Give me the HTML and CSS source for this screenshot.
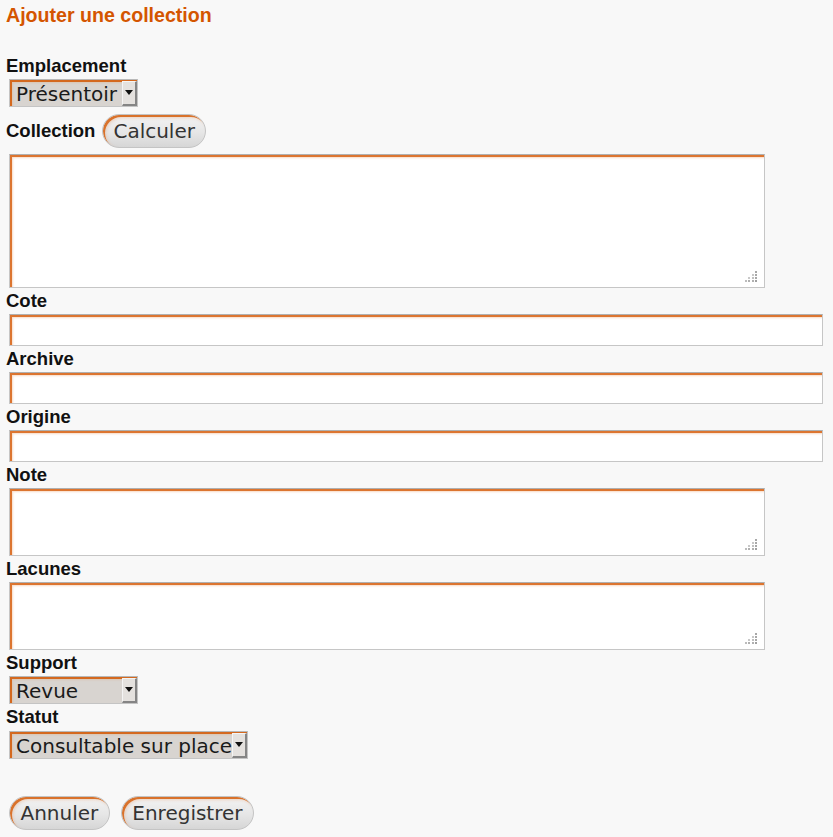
FILE: index.html
```html
<!DOCTYPE html>
<html lang="fr">
<head>
<meta charset="utf-8">
<title>Ajouter une collection</title>
<link rel="stylesheet" href="styles.css">
</head>
<body>
<h1 class="title">Ajouter une collection</h1>
<form class="form">
  <label class="label">Emplacement</label>
  <div class="select sel-short">
    <select class="select-box"><option>Présentoir</option></select>
    <span class="arrow"><svg width="8" height="5" viewBox="0 0 8 5"><path d="M0 0H8L4 5Z" fill="#111"/></svg></span>
  </div>

  <div class="row">
    <label class="label">Collection</label>
    <button type="button" class="btn">Calculer</button>
  </div>
  <div class="ta-wrap ta-tall">
    <textarea class="ta"></textarea>
    <svg class="grip" width="12" height="12" viewBox="0 0 12 12">
      <rect x="10" y="0" width="2" height="2" fill="#a8a8a8"/>
      <rect x="7" y="3" width="2" height="2" fill="#c8c8c8"/><rect x="10" y="3" width="2" height="2" fill="#a8a8a8"/>
      <rect x="3" y="6" width="2" height="2" fill="#c8c8c8"/><rect x="7" y="6" width="2" height="2" fill="#c0c0c0"/><rect x="10" y="6" width="2" height="2" fill="#a8a8a8"/>
      <rect x="0" y="9" width="2" height="2" fill="#bcbcbc"/><rect x="3" y="9" width="2" height="2" fill="#b0b0b0"/><rect x="7" y="9" width="2" height="2" fill="#b0b0b0"/><rect x="10" y="9" width="2" height="2" fill="#a0a0a0"/>
    </svg>
  </div>

  <label class="label">Cote</label>
  <input class="input" type="text">

  <label class="label">Archive</label>
  <input class="input" type="text">

  <label class="label">Origine</label>
  <input class="input" type="text">

  <label class="label">Note</label>
  <div class="ta-wrap ta-short">
    <textarea class="ta"></textarea>
    <svg class="grip" width="12" height="12" viewBox="0 0 12 12">
      <rect x="10" y="0" width="2" height="2" fill="#a8a8a8"/>
      <rect x="7" y="3" width="2" height="2" fill="#c8c8c8"/><rect x="10" y="3" width="2" height="2" fill="#a8a8a8"/>
      <rect x="3" y="6" width="2" height="2" fill="#c8c8c8"/><rect x="7" y="6" width="2" height="2" fill="#c0c0c0"/><rect x="10" y="6" width="2" height="2" fill="#a8a8a8"/>
      <rect x="0" y="9" width="2" height="2" fill="#bcbcbc"/><rect x="3" y="9" width="2" height="2" fill="#b0b0b0"/><rect x="7" y="9" width="2" height="2" fill="#b0b0b0"/><rect x="10" y="9" width="2" height="2" fill="#a0a0a0"/>
    </svg>
  </div>

  <label class="label">Lacunes</label>
  <div class="ta-wrap ta-short">
    <textarea class="ta"></textarea>
    <svg class="grip" width="12" height="12" viewBox="0 0 12 12">
      <rect x="10" y="0" width="2" height="2" fill="#a8a8a8"/>
      <rect x="7" y="3" width="2" height="2" fill="#c8c8c8"/><rect x="10" y="3" width="2" height="2" fill="#a8a8a8"/>
      <rect x="3" y="6" width="2" height="2" fill="#c8c8c8"/><rect x="7" y="6" width="2" height="2" fill="#c0c0c0"/><rect x="10" y="6" width="2" height="2" fill="#a8a8a8"/>
      <rect x="0" y="9" width="2" height="2" fill="#bcbcbc"/><rect x="3" y="9" width="2" height="2" fill="#b0b0b0"/><rect x="7" y="9" width="2" height="2" fill="#b0b0b0"/><rect x="10" y="9" width="2" height="2" fill="#a0a0a0"/>
    </svg>
  </div>

  <label class="label">Support</label>
  <div class="select sel-short">
    <select class="select-box"><option>Revue</option></select>
    <span class="arrow"><svg width="8" height="5" viewBox="0 0 8 5"><path d="M0 0H8L4 5Z" fill="#111"/></svg></span>
  </div>

  <label class="label">Statut</label>
  <div class="select sel-long">
    <select class="select-box"><option>Consultable sur place</option></select>
    <span class="arrow"><svg width="8" height="5" viewBox="0 0 8 5"><path d="M0 0H8L4 5Z" fill="#111"/></svg></span>
  </div>

  <div class="actions">
    <button type="button" class="btn">Annuler</button>
    <button type="button" class="btn">Enregistrer</button>
  </div>
</form>
</body>
</html>
```

FILE: styles.css
```css
html, body {
  margin: 0;
  background: #f8f8f8;
}
body {
  padding: 3px 6px 0 6px;
  font-family: "Liberation Sans", Arial, sans-serif;
  color: #111;
}
.title {
  margin: 0 0 27px 0;
  font-size: 19.6px;
  line-height: 24px;
  font-weight: bold;
  color: #d45500;
}
.form {
  display: flex;
  flex-direction: column;
  align-items: flex-start;
}
.label {
  display: block;
  font-family: "Liberation Sans", Arial, sans-serif;
  font-weight: bold;
  font-size: 18.5px;
  line-height: 24px;
  color: #111;
}
.row {
  display: flex;
  align-items: center;
  gap: 7px;
  margin: 6px 0 5px 0;
}

/* select */
.select {
  display: flex;
  box-sizing: border-box;
  height: 28px;
  margin: 1px 0 1px 3px;
  border: 1px solid #c4c4c4;
  border-top-color: #b8b8b8;
  background: #d8d4d0;
  box-shadow: inset 2px 2px 0 #d4691f, inset 3px 3px 2px rgba(235, 150, 90, 0.25);
}
.sel-short { width: 129px; }
.sel-long { width: 239px; margin-top: 2px; }
.select-box {
  appearance: none;
  -webkit-appearance: none;
  flex: 1;
  min-width: 0;
  border: 0;
  margin: 0;
  padding: 1px 0 0 6px;
  background: transparent;
  font-family: "DejaVu Sans", sans-serif;
  font-size: 20px;
  line-height: 26px;
  color: #1a1a1a;
  outline: none;
}
.arrow {
  box-sizing: border-box;
  width: 15px;
  margin: 1px 0 0 0;
  display: flex;
  align-items: center;
  justify-content: center;
  background: #e4e1de;
  border-left: 1px solid #f4f4f4;
  border-top: 1px solid #f4f4f4;
  border-right: 2px solid #858585;
  border-bottom: 2px solid #858585;
  padding-bottom: 2px;
}

/* text inputs */
.input {
  box-sizing: border-box;
  display: block;
  width: calc(100% - 7px);
  height: 32px;
  margin: 1px 0 1px 3px;
  padding: 0 6px;
  border: 1px solid #c6c6c6;
  border-top-color: #b0b0b0;
  background: #fff;
  box-shadow: inset 2px 2px 0 #dc7530, inset 3px 3px 2px rgba(235, 150, 90, 0.35);
  font-family: "DejaVu Sans", sans-serif;
  font-size: 20px;
  outline: none;
}

/* textareas */
.ta-wrap {
  position: relative;
  box-sizing: border-box;
  width: 756px;
  margin: 1px 0 1px 3px;
}
.ta-tall { height: 134px; }
.ta-short { height: 68px; }
.ta {
  display: block;
  box-sizing: border-box;
  width: 100%;
  height: 100%;
  margin: 0;
  padding: 4px 6px;
  resize: none;
  border: 1px solid #c6c6c6;
  border-top-color: #b0b0b0;
  background: #fff;
  box-shadow: inset 2px 2px 0 #dc7530, inset 3px 3px 2px rgba(235, 150, 90, 0.35);
  font-family: "DejaVu Sans", sans-serif;
  font-size: 20px;
  outline: none;
}
.grip {
  position: absolute;
  right: 8px;
  bottom: 5px;
}

/* buttons */
.btn {
  box-sizing: border-box;
  height: 34px;
  padding: 0 10px;
  border: 1px solid #c4c4c4;
  border-radius: 17px;
  background: linear-gradient(#f3f3f3, #e6e6e6 55%, #d6d6d6);
  box-shadow: inset 2px 2px 0 #d9722b, inset 3px 3px 3px rgba(230, 140, 80, 0.3);
  font-family: "DejaVu Sans", sans-serif;
  font-size: 20px;
  line-height: 30px;
  color: #333;
  cursor: pointer;
}
.actions .btn { padding: 0 10.5px; }
.actions {
  display: flex;
  gap: 11px;
  margin: 36px 0 0 3px;
}
```
